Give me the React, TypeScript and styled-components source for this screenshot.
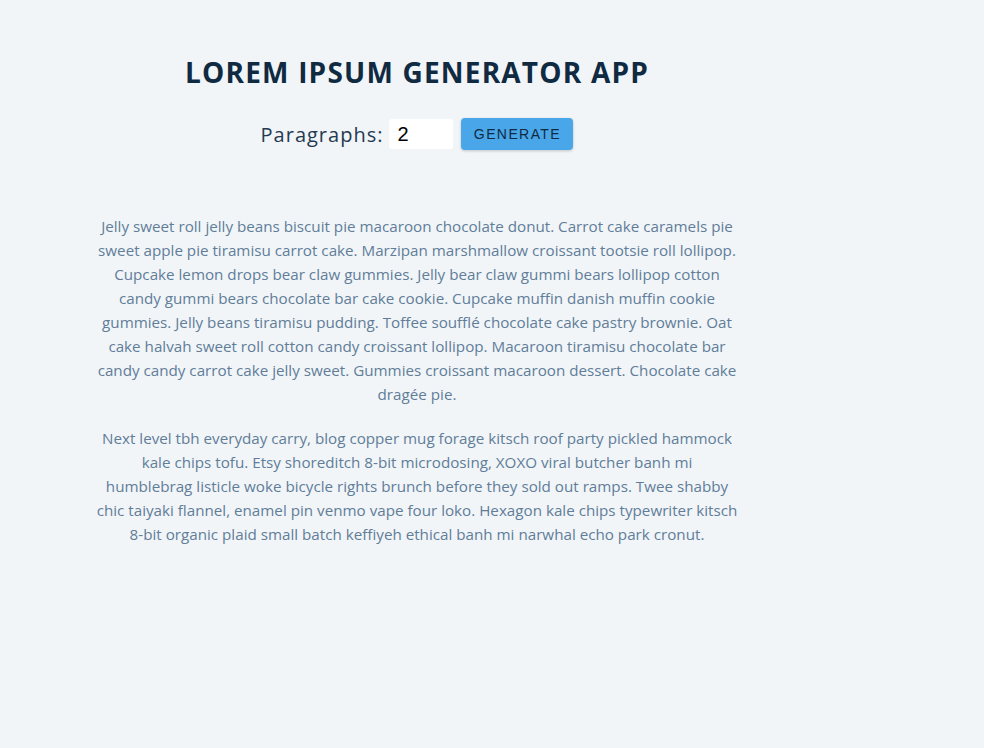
import React, { useState } from "react";
import styled, { createGlobalStyle } from "styled-components";

const GlobalStyle = createGlobalStyle`
  * { box-sizing: border-box; }
  body {
    margin: 0;
    background: #f1f5f8;
    font-family: "Open Sans", "Noto Sans", sans-serif;
    color: #102a42;
  }
`;

const Section = styled.section`
  width: 646px;
  margin-left: 94px;
  padding-top: 54px;
  text-align: center;
`;

const Title = styled.h3`
  margin: 0;
  font-size: 28px;
  line-height: 36px;
  font-weight: 700;
  letter-spacing: 1.2px;
  text-transform: uppercase;
  color: #102a42;
`;

const Form = styled.form`
  display: flex;
  justify-content: center;
  align-items: center;
  margin-top: 28px;
  height: 32px;
`;

const Label = styled.label`
  font-size: 20px;
  letter-spacing: 1px;
  color: #243a52;
  text-transform: capitalize;
  margin-right: 6px;
`;

const Input = styled.input`
  width: 64px;
  height: 30px;
  border: none;
  border-radius: 3px;
  background: #fff;
  padding: 0 8px;
  font-family: "Liberation Sans", Arial, sans-serif;
  font-size: 20px;
  color: #000;
  outline: none;
  margin-right: 8px;
`;

const Button = styled.button`
  width: 112px;
  height: 32px;
  border: none;
  border-radius: 4px;
  background: #49a6e9;
  color: #102a42;
  font-family: "Liberation Sans", Arial, sans-serif;
  font-size: 14px;
  letter-spacing: 1.4px;
  text-transform: uppercase;
  box-shadow: 0 1px 3px rgba(0, 0, 0, 0.2);
  cursor: pointer;
`;

const Article = styled.article`
  margin-top: 64px;
`;

const Para = styled.p`
  margin: 0 0 20px;
  font-size: 15.2px;
  line-height: 24px;
  color: #617d98;
`;

const texts = [
  "Jelly sweet roll jelly beans biscuit pie macaroon chocolate donut. Carrot cake caramels pie sweet apple pie tiramisu carrot cake. Marzipan marshmallow croissant tootsie roll lollipop. Cupcake lemon drops bear claw gummies. Jelly bear claw gummi bears lollipop cotton candy gummi bears chocolate bar cake cookie. Cupcake muffin danish muffin cookie gummies. Jelly beans tiramisu pudding. Toffee soufflé chocolate cake pastry brownie. Oat cake halvah sweet roll cotton candy croissant lollipop. Macaroon tiramisu chocolate bar candy candy carrot cake jelly sweet. Gummies croissant macaroon dessert. Chocolate cake dragée pie.",
  "Next level tbh everyday carry, blog copper mug forage kitsch roof party pickled hammock kale chips tofu. Etsy shoreditch 8-bit microdosing, XOXO viral butcher banh mi humblebrag\u00A0listicle woke bicycle rights brunch before they sold out ramps. Twee shabby chic taiyaki flannel, enamel pin venmo vape four loko. Hexagon kale chips typewriter kitsch 8-bit organic plaid small batch keffiyeh ethical banh mi narwhal echo park cronut.",
];

export default function App() {
  const [count, setCount] = useState("2");
  return (
    <>
      <GlobalStyle />
      <Section>
        <Title>lorem ipsum generator app</Title>
        <Form onSubmit={(e) => e.preventDefault()}>
          <Label htmlFor="amount">paragraphs:</Label>
          <Input
            type="text"
            id="amount"
            value={count}
            onChange={(e) => setCount(e.target.value)}
          />
          <Button type="submit">generate</Button>
        </Form>
        <Article>
          {texts.map((t, i) => (
            <Para key={i}>{t}</Para>
          ))}
        </Article>
      </Section>
    </>
  );
}
